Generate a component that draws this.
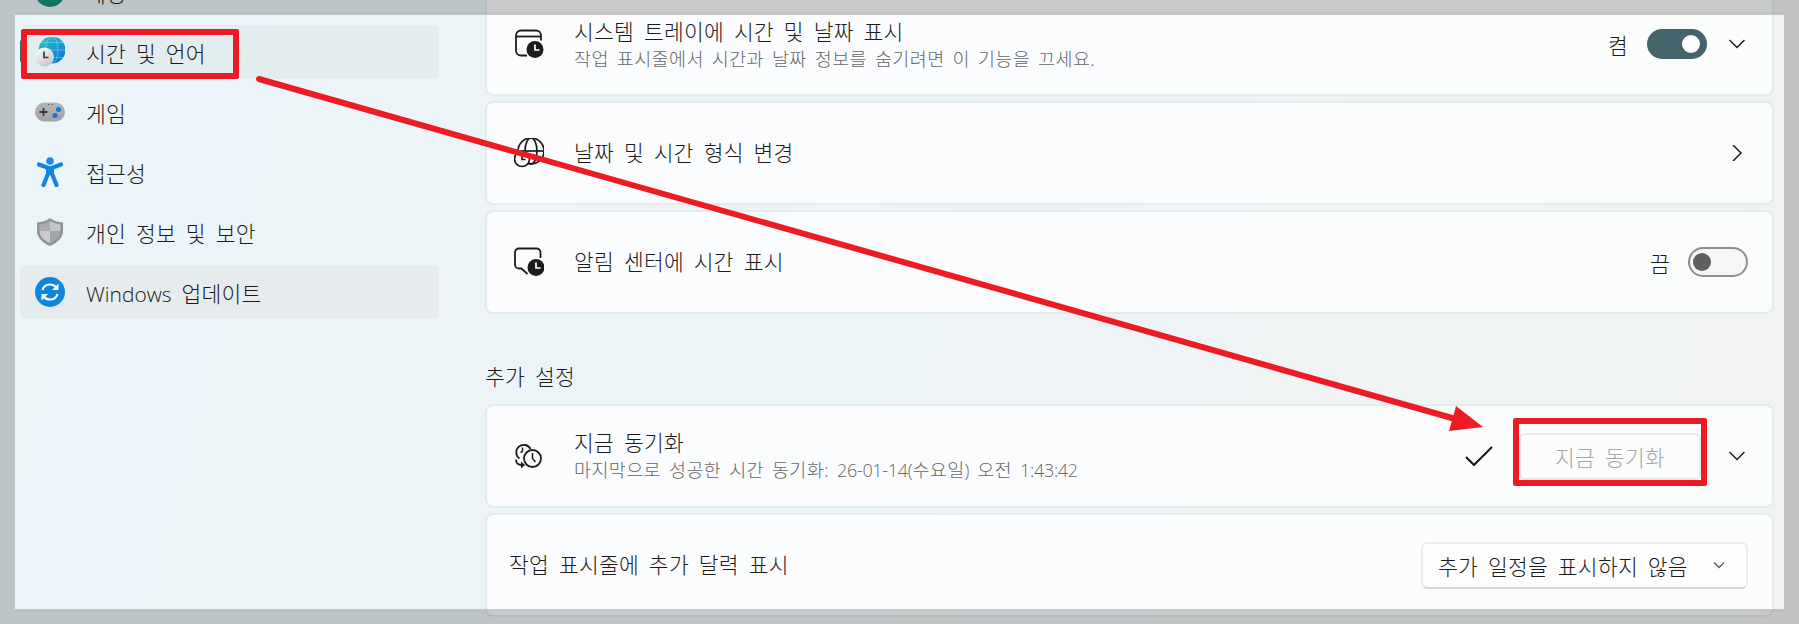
<script>
  let pick = 'time';
</script>

<div class="page">
  <aside class="sidebar">
    <div class="nav-item">
      <span class="nav-icon">
        <svg viewBox="0 0 30 30" width="30" height="30"><circle cx="15" cy="15" r="15" fill="#14917f" /></svg>
      </span>
      <span>계정</span>
    </div>
    <div class="nav-item selected">
      <i class="marker"></i>
      <span class="nav-icon">
        <svg viewBox="0 0 30 30" width="30" height="30">
          <defs>
            <linearGradient id="globe" x1="0.2" y1="0" x2="0.8" y2="1">
              <stop offset="0" stop-color="#2cc3cf" />
              <stop offset="1" stop-color="#0a6fd0" />
            </linearGradient>
            <linearGradient id="dial" x1="0.2" y1="0" x2="0.8" y2="1">
              <stop offset="0" stop-color="#fafafa" />
              <stop offset="1" stop-color="#c4c4c4" />
            </linearGradient>
          </defs>
          <circle cx="17" cy="13" r="13.5" fill="url(#globe)" />
          <g fill="none" stroke="#7fdcea" stroke-width="0.7" opacity="0.8">
            <ellipse cx="17" cy="13" rx="6" ry="13.5" />
            <path d="M3.5 13h27M6 5.5h22M6 20.5h22" />
          </g>
          <circle cx="9.5" cy="20" r="9.5" fill="url(#dial)" />
          <path d="M9 14.5v6h4.5" fill="none" stroke="#3a3a3a" stroke-width="1.7" />
        </svg>
      </span>
      <span>시간 및 언어</span>
    </div>
    <div class="nav-item">
      <span class="nav-icon">
        <svg viewBox="0 0 30 30" width="30" height="30">
          <defs>
            <linearGradient id="pad" x1="0" y1="0" x2="0" y2="1">
              <stop offset="0" stop-color="#b4b6b9" />
              <stop offset="1" stop-color="#a0a2a6" />
            </linearGradient>
          </defs>
          <rect x="0" y="5.5" width="30" height="19" rx="9.5" fill="url(#pad)" />
          <path d="M8.5 11v8M4.5 15h8" stroke="#3b3b3b" stroke-width="1.8" />
          <circle cx="23.5" cy="12.5" r="2.5" fill="#0f78d4" />
          <circle cx="20" cy="18.5" r="2.5" fill="#0f78d4" />
          <path d="M13 7.500h1.500M16.500 7.500h1.500" stroke="#5a5a5a" stroke-width="1" />
        </svg>
      </span>
      <span>게임</span>
    </div>
    <div class="nav-item">
      <span class="nav-icon">
        <svg viewBox="0 0 30 30" width="30" height="30">
          <circle cx="15" cy="4" r="3.800" fill="#1a8ee6" />
          <g fill="none" stroke="#1485de" stroke-linecap="round" stroke-linejoin="round">
            <path d="M4 7.500 15 11.500l11-4" stroke-width="4.200" />
            <path d="M15 12v6" stroke-width="8" stroke-linecap="butt" />
            <path d="M12.500 18 8.500 28M17.500 18l4 10" stroke-width="4.200" />
          </g>
        </svg>
      </span>
      <span>접근성</span>
    </div>
    <div class="nav-item">
      <span class="nav-icon">
        <svg viewBox="0 0 30 30" width="30" height="30">
          <path d="M15 1c4 3 8 4 13 4.500V14c0 7-6 12-13 15C8 26 2 21 2 14V5.500C7 5 11 4 15 1z" fill="#8f9297" />
          <path d="M15 4c3.500 2 6.500 3 10.500 3.500V14H15z" fill="#c5c7ca" />
          <path d="M15 4C11.500 6 8.500 7 4.500 7.500V14H15z" fill="#a9abaf" />
          <path d="M4.500 14H15v12c-6-2.500-10.500-6.500-10.500-12z" fill="#c9cbce" />
          <path d="M25.500 14H15v12c6-2.500 10.500-6.500 10.500-12z" fill="#a2a4a8" />
        </svg>
      </span>
      <span>개인 정보 및 보안</span>
    </div>
    <div class="nav-item hovered">
      <span class="nav-icon">
        <svg viewBox="0 0 30 30" width="30" height="30">
          <circle cx="15" cy="15" r="15" fill="#0f86dc" />
          <g fill="none" stroke="#fff" stroke-width="2.200">
            <path d="M7.500 13C8.500 9.500 11.500 7.500 15 7.500c2.500 0 4.500 1 6 2.800" />
            <path d="M22.500 17c-1 3.500-4 5.500-7.500 5.500-2.500 0-4.500-1-6-2.800" />
          </g>
          <path d="M23.500 6.500v6.500H17zM6.500 23.500V17H13z" fill="#fff" />
        </svg>
      </span>
      <span><span class="latin">Windows</span> 업데이트</span>
    </div>
  </aside>

  <main class="content">
    <section class="card">
      <span class="row-icon">
        <svg viewBox="0 0 30 30" width="30" height="30">
          <g fill="none" stroke="#1c1c1c" stroke-width="1.800">
            <path d="M13 26.500H7a5 5 0 0 1-5-5V6.500a5 5 0 0 1 5-5h15a5 5 0 0 1 5 5v5" />
            <path d="M2 7.500h25" />
          </g>
          <circle cx="21" cy="20.500" r="8.500" fill="#1c1c1c" />
          <path d="M21 15.500v5.500h4.500" fill="none" stroke="#fff" stroke-width="1.700" />
        </svg>
      </span>
      <div class="label">
        <div class="title">시스템 트레이에 시간 및 날짜 표시</div>
        <div class="sub">작업 표시줄에서 시간과 날짜 정보를 숨기려면 이 기능을 끄세요.</div>
      </div>
      <span class="state on-state">켬</span>
      <span class="toggle on"><i></i></span>
      <svg class="chev down" viewBox="0 0 16 16" width="16" height="16"><path d="M.5 4l7.500 7.500L15.500 4" /></svg>
    </section>

    <section class="card">
      <span class="row-icon">
        <svg viewBox="0 0 30 30" width="30" height="30">
          <g fill="none" stroke="#1c1c1c" stroke-width="1.700">
            <circle cx="17" cy="13" r="13" />
            <ellipse cx="17" cy="13" rx="6" ry="13" />
            <path d="M4 13h26" />
            <circle cx="8" cy="21" r="7.500" fill="#fbfdfe" />
            <path d="M8 17v4.500h3.500" />
          </g>
        </svg>
      </span>
      <div class="label">
        <div class="title">날짜 및 시간 형식 변경</div>
      </div>
      <svg class="chev right" viewBox="0 0 16 16" width="16" height="16"><path d="M4 0l8 8-8 8" /></svg>
    </section>

    <section class="card">
      <span class="row-icon">
        <svg viewBox="0 0 30 30" width="30" height="30">
          <path d="M25.500 11V5.500a4 4 0 0 0-4-4H4a4 4 0 0 0-4 4v12a4 4 0 0 0 4 4h2.500l6 5.500" fill="none" stroke="#1c1c1c" stroke-width="1.800" transform="translate(1 0)" />
          <circle cx="22" cy="20.500" r="8.500" fill="#1c1c1c" />
          <path d="M22 15.500v5.500h4.500" fill="none" stroke="#fff" stroke-width="1.700" />
        </svg>
      </span>
      <div class="label">
        <div class="title">알림 센터에 시간 표시</div>
      </div>
      <span class="state off-state">끔</span>
      <span class="toggle off"><i></i></span>
    </section>

    <h2>추가 설정</h2>

    <section class="card">
      <span class="row-icon">
        <svg viewBox="0 0 30 30" width="30" height="30">
          <g fill="none" stroke="#1c1c1c" stroke-width="1.800">
            <path d="M5.500 17.500a7.500 7.500 0 1 1 11-9.500" />
            <path d="M8.500 6.500v4l-2 1" stroke-width="1.400" />
            <circle cx="18.500" cy="17.500" r="8.500" />
            <path d="M18.500 12v5.500l3 3.500" stroke-width="1.500" />
            <path d="M2 18.500c0 4 3 5.500 6 5.500" />
          </g>
          <path d="M7 20.500l4 3.500-4 3.500z" fill="#1c1c1c" />
        </svg>
      </span>
      <div class="label">
        <div class="title">지금 동기화</div>
        <div class="sub">마지막으로 성공한 시간 동기화: <span class="digits">26-01-14(</span>수요일<span class="digits">)</span> 오전 <span class="digits">1:43:42</span></div>
      </div>
      <svg class="check" viewBox="0 0 28 20" width="28" height="20"><path d="M1 11l8 8L27 1" /></svg>
      <button class="sync" disabled>지금 동기화</button>
      <svg class="chev down" viewBox="0 0 16 16" width="16" height="16"><path d="M.5 4l7.500 7.500L15.500 4" /></svg>
    </section>

    <section class="card plain">
      <div class="label">
        <div class="title">작업 표시줄에 추가 달력 표시</div>
      </div>
      <div class="select">
        <span>추가 일정을 표시하지 않음</span>
        <svg viewBox="0 0 12 12" width="12" height="12"><path d="M1 3.500l5 5 5-5" /></svg>
      </div>
    </section>
  </main>

  <div class="frame"></div>
  <div class="redbox nav-box"></div>
  <div class="redbox btn-box"></div>
  <svg class="arrow" viewBox="0 0 1799 624" width="1799" height="624">
    <path d="M259 79 1452 418" stroke="#ed1c24" stroke-width="6" stroke-linecap="round" />
    <path d="M1456 406 1483 427 1449 431z" fill="#ed1c24" />
  </svg>
</div>

<style>
  :global(body) {
    margin: 0;
  }

  .page {
    position: relative;
    display: flex;
    width: 1799px;
    height: 624px;
    overflow: hidden;
    background: linear-gradient(105deg, #ebf5f9 0%, #eef4f6 55%, #f1f3f2 100%);
    font-family: "Open Sans", "Noto Sans CJK KR", sans-serif;
    font-size: 21.5px;
    font-weight: 300;
    letter-spacing: 0.25px;
    word-spacing: 4px;
    color: #1b1b1b;
  }

  .latin {
    font-size: 21px;
    letter-spacing: 0;
  }

  .sidebar {
    display: flex;
    flex-direction: column;
    gap: 6px;
    width: 419px;
    margin: -35px 0 0 20px;
    flex: none;
  }

  .nav-item {
    position: relative;
    display: flex;
    align-items: center;
    height: 54px;
    flex: none;
    padding-left: 15px;
    border-radius: 6px;
  }

  .nav-item.selected {
    background: #e3ecef;
  }

  .nav-item.hovered {
    background: #e6ebee;
  }

  .marker {
    position: absolute;
    left: 0;
    top: 15px;
    width: 3px;
    height: 22px;
    border-radius: 2px;
    background: #43646b;
  }

  .nav-icon {
    display: flex;
    width: 30px;
    height: 30px;
    margin-right: 21px;
    flex: none;
  }

  .content {
    display: flex;
    flex-direction: column;
    width: 1289px;
    margin: -8px 0 0 46px;
    flex: none;
  }

  .card {
    display: flex;
    align-items: center;
    box-sizing: border-box;
    height: 104px;
    flex: none;
    margin-bottom: 5px;
    padding: 0 24px 0 27px;
    border: 2px solid #e4ebed;
    border-radius: 8px;
    background: rgba(255, 255, 255, 0.74);
  }

  .card.plain {
    padding-left: 22px;
  }

  .row-icon {
    display: flex;
    width: 30px;
    height: 30px;
    margin-right: 30px;
    flex: none;
  }

  .label {
    flex: 1;
  }

  .title {
    line-height: 28px;
  }

  .sub {
    font-size: 18.5px;
    line-height: 25px;
    letter-spacing: 0.38px;
    word-spacing: 2.8px;
    color: #666;
  }

  .digits {
    font-size: 18px;
    letter-spacing: -0.3px;
    word-spacing: 0;
  }

  h2 {
    margin: 43px 0 12px;
    font-size: 21.5px;
    font-weight: 300;
    line-height: 30px;
  }

  .state {
    flex: none;
  }

  .on-state {
    margin-right: 19px;
  }

  .off-state {
    margin-right: 18px;
  }

  .toggle {
    position: relative;
    display: block;
    box-sizing: border-box;
    width: 60px;
    height: 30px;
    flex: none;
    border-radius: 15px;
  }

  .toggle i {
    position: absolute;
    top: 6px;
    width: 18px;
    height: 18px;
    border-radius: 50%;
  }

  .toggle.on {
    background: #43646b;
  }

  .toggle.on i {
    left: 35px;
    background: #fff;
  }

  .toggle.off {
    border: 2px solid #8f8f8f;
    background: #f5f6f7;
  }

  .toggle.off i {
    left: 3px;
    top: 4px;
    background: #5f5f5f;
  }

  .chev {
    flex: none;
    margin-right: 3px;
    fill: none;
    stroke: #1b1b1b;
    stroke-width: 1.5;
  }

  .chev.down {
    margin-left: 22px;
  }

  .check {
    flex: none;
    margin-right: 26px;
    fill: none;
    stroke: #111;
    stroke-width: 2;
  }

  .sync {
    width: 182px;
    height: 47px;
    flex: none;
    padding: 0;
    border: 2px solid #e8eaea;
    border-radius: 6px;
    background: #fbfcfc;
    font: inherit;
    letter-spacing: inherit;
    word-spacing: inherit;
    color: #a6a6a6;
  }

  .sync + .chev.down {
    margin-left: 28px;
  }

  .select {
    display: flex;
    align-items: center;
    box-sizing: border-box;
    width: 327px;
    height: 47px;
    flex: none;
    padding-left: 15px;
    border: 2px solid #ebeced;
    border-bottom-color: #d4d5d6;
    border-radius: 6px;
    background: #fdfdfd;
  }

  .select span {
    width: 262px;
    flex: none;
    white-space: nowrap;
  }

  .select svg {
    margin-left: 13px;
    fill: none;
    stroke: #5f5f5f;
    stroke-width: 1.4;
  }

  .frame {
    position: absolute;
    inset: 0;
    border: 15px solid rgba(0, 0, 0, 0.2);
  }

  .redbox {
    position: absolute;
    box-sizing: border-box;
    border: 6px solid #ed1c24;
    border-radius: 2px;
  }

  .nav-box {
    left: 21px;
    top: 29px;
    width: 218px;
    height: 50px;
  }

  .btn-box {
    left: 1513px;
    top: 418px;
    width: 194px;
    height: 68px;
  }

  .arrow {
    position: absolute;
    left: 0;
    top: 0;
  }
</style>
